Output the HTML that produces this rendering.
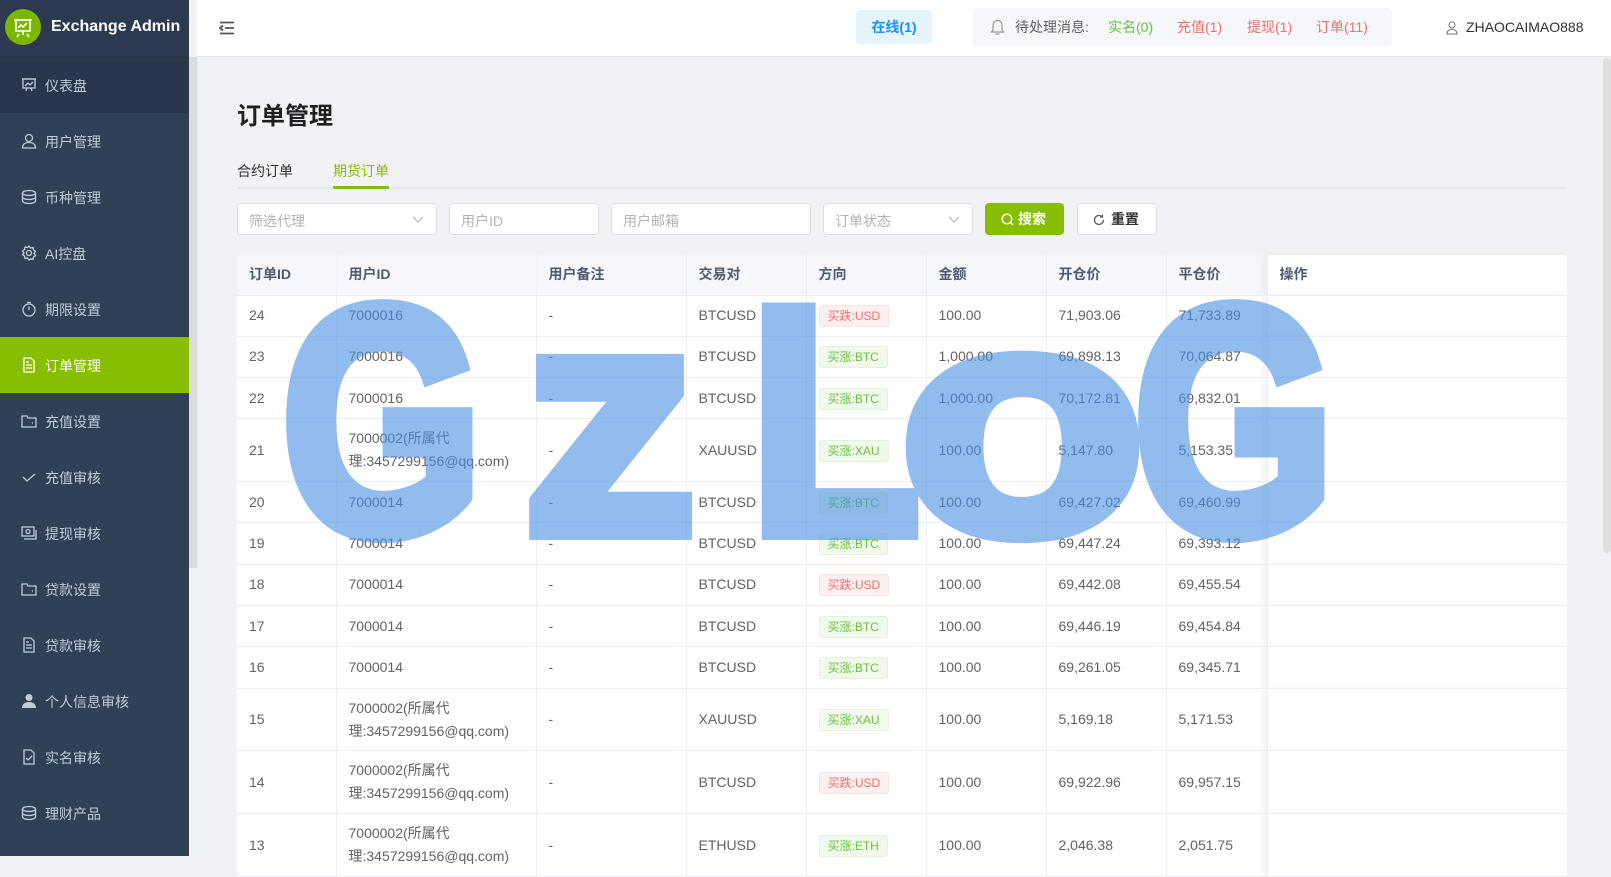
<!DOCTYPE html>
<html><head><meta charset="utf-8">
<style>
*{box-sizing:border-box;margin:0;padding:0}
body{width:1611px;height:856px;overflow:hidden;background:#f0f2f5;font-family:"Liberation Sans","Noto Sans CJK SC",sans-serif;position:relative;color:#606266}
.side{position:absolute;left:0;top:0;width:189px;height:856px;background:#304156}
.logo{height:57px;background:#2b3a4f;position:relative;border-bottom:1px solid #263445}
.logo .c{position:absolute;left:5px;top:9px;width:36px;height:36px;border-radius:50%;background:#7db600}
.logo .t{position:absolute;left:51px;top:18px;color:#fff;font-weight:bold;font-size:16px}
.mi{height:56px;position:relative;color:#bfcbd9;font-size:14px}
.mi svg{position:absolute;left:21px;top:20px}
.mi span{position:absolute;left:45px;top:19px}
.mi.dash{background:#28374b}
.mi.act{background:#88be00;color:#fff}
.sbar{position:absolute;left:189px;top:57px;width:8px;height:511px;background:#dcdcdc}
.hdr{position:absolute;left:197px;top:0;width:1414px;height:57px;background:#fff;border-bottom:1px solid #e6e6e6}
.abs{position:absolute}
.inp{position:absolute;top:203px;height:32px;background:#fff;border:1px solid #dcdfe6;border-radius:4px;font-size:14px;color:#b0b3b9;padding:7px 11px}
.arr{position:absolute;right:12px;top:9px}
table{position:absolute;left:237px;top:255px;border-collapse:collapse;table-layout:fixed;width:1330px;background:#fff;font-size:14px}
td,th{border-bottom:1px solid #ebeef5;border-right:1px solid #ebeef5;text-align:left;padding:0 12px;vertical-align:middle;line-height:23px}
th{height:40px;background:#f5f7fa;color:#515a6e;font-weight:bold}
th.op,td.op{background:#fff;border-right:none;box-shadow:-3px 0 6px rgba(0,0,0,.06)}
tr.s td{height:41.3px}
tr.d td{height:62.8px}
.tg{display:inline-block;height:22px;line-height:20px;padding:0 8px;font-size:12px;border-radius:3px;border:1px solid}
.r{background:#fef0f0;border-color:#fde2e2;color:#f56c6c}
.g{background:#f0f9eb;border-color:#e1f3d8;color:#67c23a}
</style></head><body>
<div class="side">
 <div class="logo"><div class="c"><svg width="36" height="36" viewBox="0 0 36 36"><g fill="none" stroke="#fff" stroke-width="1.6"><rect x="11" y="11" width="14" height="11"/><path d="M9 11h18M14 25l-2 3M22 25l2 3M18 22v4M13 19l3-3 2 2 4-4"/></g></svg></div><div class="t">Exchange Admin</div></div>
 <div class="mi dash"><svg width="16" height="16" viewBox="0 0 16 16" fill="none" stroke="#bfcbd9" stroke-width="1.3"><rect x="2" y="2" width="12" height="9"/><path d="M1 2h14M5 14l1-3M11 14l-1-3M4 9l3-3 2 2 3-3"/></svg><span>仪表盘</span></div>
 <div class="mi"><svg width="16" height="16" viewBox="0 0 16 16" fill="none" stroke="#bfcbd9" stroke-width="1.3"><circle cx="8" cy="5" r="3.5"/><path d="M1.5 15c0-4 3-5.5 6.5-5.5s6.5 1.5 6.5 5.5z"/></svg><span>用户管理</span></div>
 <div class="mi"><svg width="16" height="16" viewBox="0 0 16 16" fill="none" stroke="#bfcbd9" stroke-width="1.3"><ellipse cx="8" cy="4" rx="6.5" ry="2.5"/><path d="M1.5 4v8c0 1.4 3 2.5 6.5 2.5s6.5-1.1 6.5-2.5V4M1.5 8c0 1.4 3 2.5 6.5 2.5s6.5-1.1 6.5-2.5"/></svg><span>币种管理</span></div>
 <div class="mi"><svg width="16" height="16" viewBox="0 0 16 16" fill="none" stroke="#bfcbd9" stroke-width="1.3"><circle cx="8" cy="8" r="2.5"/><path d="M8 1l1.5 2 2.5-.5.5 2.5 2 1.5-1.5 2 1.5 2-2 1.5-.5 2.5-2.5-.5L8 15l-1.5-2-2.5.5-.5-2.5-2-1.5L3 8 1.5 6l2-1.5L4 2l2.5.5z"/></svg><span>AI控盘</span></div>
 <div class="mi"><svg width="16" height="16" viewBox="0 0 16 16" fill="none" stroke="#bfcbd9" stroke-width="1.3"><circle cx="8" cy="9" r="6"/><path d="M6 1.5h4M8 9V5.5"/></svg><span>期限设置</span></div>
 <div class="mi act"><svg width="16" height="16" viewBox="0 0 16 16" fill="none" stroke="#fff" stroke-width="1.3"><path d="M3 1h7l3 3v11H3z M5 8h6M5 11h6M5 5h3"/></svg><span>订单管理</span></div>
 <div class="mi"><svg width="16" height="16" viewBox="0 0 16 16" fill="none" stroke="#bfcbd9" stroke-width="1.3"><path d="M1 3h5l1 2h8v9H1z M11 10h1"/></svg><span>充值设置</span></div>
 <div class="mi"><svg width="16" height="16" viewBox="0 0 16 16" fill="none" stroke="#bfcbd9" stroke-width="1.3"><path d="M2 8l4 4 8-7"/></svg><span>充值审核</span></div>
 <div class="mi"><svg width="16" height="16" viewBox="0 0 16 16" fill="none" stroke="#bfcbd9" stroke-width="1.3"><rect x="1" y="2" width="12" height="9"/><path d="M3 14h12V5"/><circle cx="7" cy="6.5" r="2"/></svg><span>提现审核</span></div>
 <div class="mi"><svg width="16" height="16" viewBox="0 0 16 16" fill="none" stroke="#bfcbd9" stroke-width="1.3"><path d="M1 3h5l1 2h8v9H1z M11 10h1"/></svg><span>贷款设置</span></div>
 <div class="mi"><svg width="16" height="16" viewBox="0 0 16 16" fill="none" stroke="#bfcbd9" stroke-width="1.3"><path d="M3 1h7l3 3v11H3z M5 8h6M5 11h6M5 5h3"/></svg><span>贷款审核</span></div>
 <div class="mi"><svg width="16" height="16" viewBox="0 0 16 16" fill="#bfcbd9"><circle cx="8" cy="4.5" r="3.5"/><path d="M1 15c0-4 3-6 7-6s7 2 7 6z"/></svg><span>个人信息审核</span></div>
 <div class="mi"><svg width="16" height="16" viewBox="0 0 16 16" fill="none" stroke="#bfcbd9" stroke-width="1.3"><path d="M3 1h7l3 3v11H3z M5 9l2 2 4-4"/></svg><span>实名审核</span></div>
 <div class="mi"><svg width="16" height="16" viewBox="0 0 16 16" fill="none" stroke="#bfcbd9" stroke-width="1.3"><ellipse cx="8" cy="4" rx="6.5" ry="2.5"/><path d="M1.5 4v8c0 1.4 3 2.5 6.5 2.5s6.5-1.1 6.5-2.5V4M1.5 8c0 1.4 3 2.5 6.5 2.5s6.5-1.1 6.5-2.5"/></svg><span>理财产品</span></div>
</div>
<div class="sbar"></div>
<div class="hdr"></div>
<svg class="abs" style="left:219px;top:21px" width="16" height="14" viewBox="0 0 16 14"><path d="M1 1.5h14M6 7h9M1 12.5h14M4 4.5L1 7l3 2.5" fill="none" stroke="#555" stroke-width="1.8"/></svg>
<div class="abs" style="left:856px;top:10px;width:76px;height:34px;background:#e6f4ff;border-radius:4px;color:#1890ff;font-size:14px;font-weight:bold;text-align:center;line-height:34px">在线(1)</div>
<div class="abs" style="left:973px;top:8px;width:419px;height:38px;background:#f5f7fa;border-radius:4px;font-size:14px;line-height:38px">
 <svg class="abs" style="left:17px;top:11px" width="15" height="17" viewBox="0 0 15 17"><path d="M7.5 1.5a4.5 4.5 0 0 0-4.5 4.5v5L1.5 13h12L12 11V6a4.5 4.5 0 0 0-4.5-4.5zM5.5 15h4" fill="none" stroke="#999" stroke-width="1.2"/></svg>
 <span class="abs" style="left:42px;color:#606266">待处理消息:</span>
 <span class="abs" style="left:135px;color:#67c23a">实名(0)</span>
 <span class="abs" style="left:204px;color:#f56c6c">充值(1)</span>
 <span class="abs" style="left:274px;color:#f56c6c">提现(1)</span>
 <span class="abs" style="left:343px;color:#f56c6c">订单(11)</span>
</div>
<svg class="abs" style="left:1446px;top:21px" width="12" height="14" viewBox="0 0 12 14"><circle cx="6" cy="4" r="3" fill="none" stroke="#777" stroke-width="1.1"/><path d="M1 13c0-3 2-4.5 5-4.5s5 1.5 5 4.5z" fill="none" stroke="#777" stroke-width="1.1"/></svg>
<div class="abs" style="left:1466px;top:19px;font-size:14px;color:#303133">ZHAOCAIMAO888</div>
<div class="abs" style="left:1603px;top:58px;width:8px;height:495px;background:#dedede;border-radius:4px"></div>

<div class="abs" style="left:237px;top:96px;font-size:24px;font-weight:bold;color:#1f1f1f">订单管理</div>
<div class="abs" style="left:237px;top:161px;font-size:14px;color:#303133">合约订单</div>
<div class="abs" style="left:333px;top:161px;font-size:14px;color:#88be00">期货订单</div>
<div class="abs" style="left:237px;top:187px;width:1330px;height:2px;background:#e4e7ed"></div>
<div class="abs" style="left:333px;top:186px;width:56px;height:3px;background:#88be00"></div>

<div class="inp" style="left:237px;width:200px">筛选代理<svg class="arr" width="12" height="12" viewBox="0 0 12 12"><path d="M1 4l5 5 5-5" fill="none" stroke="#b0b3b9" stroke-width="1.2"/></svg></div>
<div class="inp" style="left:449px;width:150px">用户ID</div>
<div class="inp" style="left:611px;width:200px">用户邮箱</div>
<div class="inp" style="left:823px;width:150px">订单状态<svg class="arr" width="12" height="12" viewBox="0 0 12 12"><path d="M1 4l5 5 5-5" fill="none" stroke="#b0b3b9" stroke-width="1.2"/></svg></div>
<div class="abs" style="left:985px;top:203px;width:79px;height:32px;background:#88be00;border-radius:4px;color:#fff;font-size:14px;font-weight:bold;line-height:32px;padding-left:16px"><svg style="vertical-align:-2px;margin-right:4px" width="13" height="13" viewBox="0 0 13 13"><circle cx="6" cy="6" r="4.8" fill="none" stroke="#fff" stroke-width="1.4"/><path d="M9.5 9.5l2.5 2.5" stroke="#fff" stroke-width="1.4"/></svg>搜索</div>
<div class="abs" style="left:1077px;top:203px;width:80px;height:32px;background:#fff;border:1px solid #dcdfe6;border-radius:4px;color:#303133;font-size:14px;font-weight:bold;line-height:30px;padding-left:15px"><svg style="vertical-align:-2px;margin-right:6px" width="12" height="12" viewBox="0 0 12 12"><path d="M10.5 6A4.5 4.5 0 1 1 9 2.6M9.5 0.5v2.5H7" fill="none" stroke="#555" stroke-width="1.2"/></svg>重置</div>

<table>
<colgroup><col style="width:99px"><col style="width:200px"><col style="width:150px"><col style="width:120px"><col style="width:120px"><col style="width:120px"><col style="width:120px"><col style="width:101px"><col style="width:300px"></colgroup>
<tr><th>订单ID</th><th>用户ID</th><th>用户备注</th><th>交易对</th><th>方向</th><th>金额</th><th>开仓价</th><th>平仓价</th><th class="op">操作</th></tr>
<tr class="s"><td>24</td><td>7000016</td><td>-</td><td>BTCUSD</td><td><span class="tg r">买跌:USD</span></td><td>100.00</td><td>71,903.06</td><td>71,733.89</td><td class="op"></td></tr>
<tr class="s"><td>23</td><td>7000016</td><td>-</td><td>BTCUSD</td><td><span class="tg g">买涨:BTC</span></td><td>1,000.00</td><td>69,898.13</td><td>70,064.87</td><td class="op"></td></tr>
<tr class="s"><td>22</td><td>7000016</td><td>-</td><td>BTCUSD</td><td><span class="tg g">买涨:BTC</span></td><td>1,000.00</td><td>70,172.81</td><td>69,832.01</td><td class="op"></td></tr>
<tr class="d"><td>21</td><td>7000002(所属代<br>理:3457299156@qq.com)</td><td>-</td><td>XAUUSD</td><td><span class="tg g">买涨:XAU</span></td><td>100.00</td><td>5,147.80</td><td>5,153.35</td><td class="op"></td></tr>
<tr class="s"><td>20</td><td>7000014</td><td>-</td><td>BTCUSD</td><td><span class="tg g">买涨:BTC</span></td><td>100.00</td><td>69,427.02</td><td>69,460.99</td><td class="op"></td></tr>
<tr class="s"><td>19</td><td>7000014</td><td>-</td><td>BTCUSD</td><td><span class="tg g">买涨:BTC</span></td><td>100.00</td><td>69,447.24</td><td>69,393.12</td><td class="op"></td></tr>
<tr class="s"><td>18</td><td>7000014</td><td>-</td><td>BTCUSD</td><td><span class="tg r">买跌:USD</span></td><td>100.00</td><td>69,442.08</td><td>69,455.54</td><td class="op"></td></tr>
<tr class="s"><td>17</td><td>7000014</td><td>-</td><td>BTCUSD</td><td><span class="tg g">买涨:BTC</span></td><td>100.00</td><td>69,446.19</td><td>69,454.84</td><td class="op"></td></tr>
<tr class="s"><td>16</td><td>7000014</td><td>-</td><td>BTCUSD</td><td><span class="tg g">买涨:BTC</span></td><td>100.00</td><td>69,261.05</td><td>69,345.71</td><td class="op"></td></tr>
<tr class="d"><td>15</td><td>7000002(所属代<br>理:3457299156@qq.com)</td><td>-</td><td>XAUUSD</td><td><span class="tg g">买涨:XAU</span></td><td>100.00</td><td>5,169.18</td><td>5,171.53</td><td class="op"></td></tr>
<tr class="d"><td>14</td><td>7000002(所属代<br>理:3457299156@qq.com)</td><td>-</td><td>BTCUSD</td><td><span class="tg r">买跌:USD</span></td><td>100.00</td><td>69,922.96</td><td>69,957.15</td><td class="op"></td></tr>
<tr class="d"><td>13</td><td>7000002(所属代<br>理:3457299156@qq.com)</td><td>-</td><td>ETHUSD</td><td><span class="tg g">买涨:ETH</span></td><td>100.00</td><td>2,046.38</td><td>2,051.75</td><td class="op"></td></tr>
</table>

<svg class="abs" style="left:0;top:0" width="1611" height="856">
<g opacity="0.6" font-family="Liberation Sans, sans-serif" font-weight="bold" fill="#4a90e2" stroke="#4a90e2" stroke-width="16" stroke-linejoin="miter" font-size="322">
<text x="282" y="532" textLength="200" lengthAdjust="spacingAndGlyphs">G</text>
<text x="524" y="532" textLength="172" lengthAdjust="spacingAndGlyphs">z</text>
<text x="750" y="532" textLength="170" lengthAdjust="spacingAndGlyphs">L</text>
<text x="900" y="532" textLength="245" lengthAdjust="spacingAndGlyphs">o</text>
<text x="1134" y="532" textLength="200" lengthAdjust="spacingAndGlyphs">G</text>
</g></svg>
</body></html>
